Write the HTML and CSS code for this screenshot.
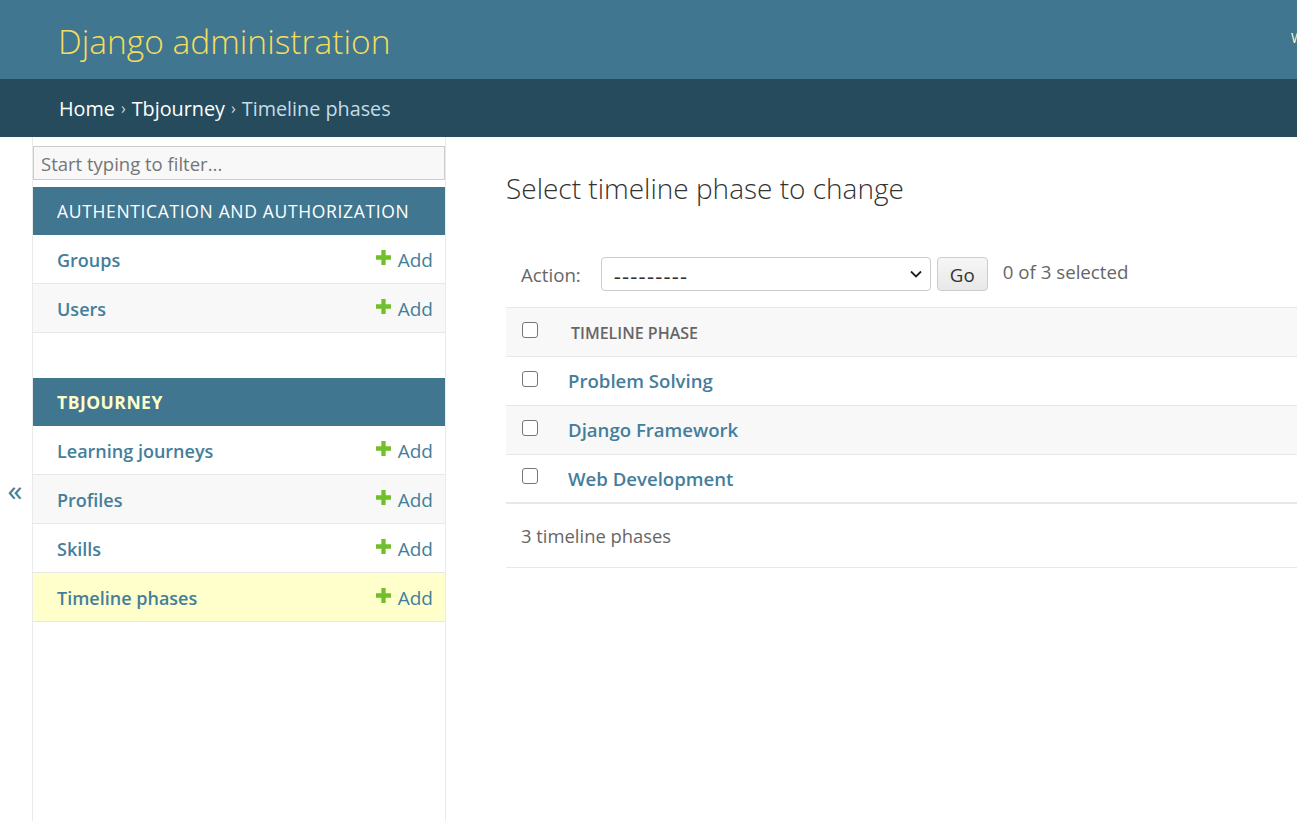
FILE: index.html
```html
<!DOCTYPE html>
<html lang="en">
<head>
<meta charset="utf-8">
<title>Select timeline phase to change | Django site admin</title>
<link rel="stylesheet" href="styles.css">
</head>
<body>
<div class="page">
  <header class="header">
    <div class="branding">Django administration</div>
    <div class="user-tools">Welcome, <strong>admin</strong>. View site / Change password / Log out</div>
  </header>
  <nav class="breadcrumbs">
    <a href="#">Home</a><span class="sep">›</span><a href="#">Tbjourney</a><span class="sep">›</span><span class="current">Timeline phases</span>
  </nav>
  <div class="main">
    <div class="toggle"><span class="toggle-icon">«</span></div>
    <aside class="sidebar">
      <div class="filter">Start typing to filter...</div>
      <div class="module">
        <div class="caption">Authentication and Authorization</div>
        <div class="row"><a class="model" href="#">Groups</a><a class="add" href="#"><svg class="plus" viewBox="0 0 14 14"><path d="M5 0h4v5h5v4H9v5H5V9H0V5h5z"/></svg>Add</a></div>
        <div class="row alt"><a class="model" href="#">Users</a><a class="add" href="#"><svg class="plus" viewBox="0 0 14 14"><path d="M5 0h4v5h5v4H9v5H5V9H0V5h5z"/></svg>Add</a></div>
      </div>
      <div class="module">
        <div class="caption current">Tbjourney</div>
        <div class="row"><a class="model" href="#">Learning journeys</a><a class="add" href="#"><svg class="plus" viewBox="0 0 14 14"><path d="M5 0h4v5h5v4H9v5H5V9H0V5h5z"/></svg>Add</a></div>
        <div class="row alt"><a class="model" href="#">Profiles</a><a class="add" href="#"><svg class="plus" viewBox="0 0 14 14"><path d="M5 0h4v5h5v4H9v5H5V9H0V5h5z"/></svg>Add</a></div>
        <div class="row"><a class="model" href="#">Skills</a><a class="add" href="#"><svg class="plus" viewBox="0 0 14 14"><path d="M5 0h4v5h5v4H9v5H5V9H0V5h5z"/></svg>Add</a></div>
        <div class="row selected"><a class="model" href="#">Timeline phases</a><a class="add" href="#"><svg class="plus" viewBox="0 0 14 14"><path d="M5 0h4v5h5v4H9v5H5V9H0V5h5z"/></svg>Add</a></div>
      </div>
    </aside>
    <main class="content">
      <h1 class="title">Select timeline phase to change</h1>
      <div class="actions">
        <span class="action-label">Action:</span>
        <div class="select"><span class="dashes">---------</span><svg class="chev" viewBox="0 0 12 8"><path d="M1 1.5l5 5 5-5" fill="none" stroke="#222" stroke-width="1.8"/></svg></div>
        <button class="go">Go</button>
        <span class="counter">0 of 3 selected</span>
      </div>
      <div class="table">
        <div class="trow thead"><span class="cb"></span><span class="col">Timeline phase</span></div>
        <div class="trow"><span class="cb"></span><a class="cell" href="#">Problem Solving</a></div>
        <div class="trow alt"><span class="cb"></span><a class="cell" href="#">Django Framework</a></div>
        <div class="trow last"><span class="cb"></span><a class="cell" href="#">Web Development</a></div>
      </div>
      <div class="paginator">3 timeline phases</div>
    </main>
  </div>
</div>
</body>
</html>
```
FILE: styles.css
```css
html, body {
  margin: 0;
  padding: 0;
  overflow: hidden;
  background: #fff;
}
body {
  font-family: "Open Sans", "Noto Sans", sans-serif;
  color: #333;
}
a { text-decoration: none; }
.page {
  width: 1700px;
  min-height: 821px;
  display: flex;
  flex-direction: column;
}
.header {
  height: 79px;
  background: #417690;
  display: flex;
  align-items: center;
  padding-left: 58px;
  position: relative;
}
.branding {
  color: #f5dd5d;
  font-size: 33.5px;
  font-weight: 300;
  line-height: 40px;
  margin-top: 2px;
}
.user-tools {
  position: absolute;
  left: 1291px;
  top: 28px;
  color: #ffc;
  font-size: 13.75px;
  text-transform: uppercase;
  letter-spacing: 0.6px;
  white-space: nowrap;
}
.breadcrumbs {
  height: 58px;
  background: #264b5d;
  display: flex;
  align-items: center;
  padding-left: 59px;
  font-size: 19.8px;
  color: #c4dce8;
}
.breadcrumbs a { color: #fff; }
.breadcrumbs .sep { margin: 0 6px; font-size: 16px; }
.main {
  flex: 1;
  display: flex;
}
.toggle {
  border-right: 1px solid #eaeaea;
  display: flex;
  justify-content: center;
  padding-top: 333px;
  box-sizing: border-box;
  flex: 0 0 33px;
}
.toggle-icon {
  color: #447e9b;
  font-size: 30px;
  line-height: 40px;
  height: 40px;
  margin-left: -2px;
}
.sidebar {
  flex: 0 0 412px;
  border-right: 1px solid #eaeaea;
  padding-top: 9px;
}
.filter {
  height: 34px;
  box-sizing: border-box;
  border: 1px solid #ccc;
  background: #f8f8f8;
  color: #757575;
  font-size: 18.5px;
  padding-left: 7px;
  display: flex;
  align-items: center;
  margin-bottom: 7px;
}
.module { margin-bottom: 45px; }
.caption {
  height: 48px;
  background: #417690;
  color: #fff;
  font-size: 17.5px;
  letter-spacing: 0.66px;
  text-transform: uppercase;
  display: flex;
  align-items: center;
  padding-left: 24px;
}
.caption.current {
  color: #ffc;
  font-weight: 700;
  letter-spacing: 0.5px;
}
.row {
  height: 48px;
  border-bottom: 1px solid #e8e8e8;
  display: flex;
  align-items: center;
  justify-content: space-between;
  padding: 0 12px 0 24px;
  background: #fff;
}
.row.alt { background: #f8f8f8; }
.row.selected { background: #ffc; }
.model {
  color: #447e9b;
  font-weight: 600;
  font-size: 18px;
  margin-top: 2px;
}
.add {
  color: #447e9b;
  font-size: 19px;
  display: flex;
  align-items: center;
  margin-top: 2px;
}
.plus {
  width: 15px;
  height: 15px;
  fill: #70bf2b;
  margin-right: 7px;
  margin-top: -5px;
}
.content {
  flex: 1;
  padding: 0 0 0 60px;
}
.title {
  margin: 0;
  height: 119px;
  box-sizing: border-box;
  padding-top: 32px;
  font-size: 28px;
  font-weight: 300;
  line-height: 38px;
  color: #333;
}
.actions {
  height: 36px;
  display: flex;
  align-items: center;
  padding-left: 15px;
  margin-bottom: 15px;
  font-size: 18.7px;
}
.action-label { color: #666; margin-right: 20px; }
.select {
  width: 330px;
  height: 34px;
  box-sizing: border-box;
  border: 1px solid #ccc;
  border-radius: 4px;
  display: flex;
  align-items: center;
  justify-content: space-between;
  padding: 0 8px 0 12px;
  color: #333;
}
.dashes {
  font-size: 22px;
  letter-spacing: 1.2px;
  margin-top: 2px;
}
.chev { width: 12px; height: 8px; }
.go {
  margin-left: 6px;
  width: 51px;
  height: 34px;
  border: 1px solid #ccc;
  border-radius: 4px;
  background: linear-gradient(#f6f6f6, #e8e8e8);
  font-family: inherit;
  font-size: 18.7px;
  color: #333;
  padding: 0;
}
.counter { color: #666; margin-left: 15px; margin-top: -6px; }
.table {
  border-top: 1px solid #e8e8e8;
}
.trow {
  height: 48px;
  border-bottom: 1px solid #e8e8e8;
  display: flex;
  align-items: center;
  padding-left: 16px;
}
.trow.thead { background: #f8f8f8; }
.trow.alt { background: #f8f8f8; }
.trow.last { border-bottom: 2px solid #e8e8e8; height: 47px; }
.cb {
  width: 16px;
  height: 16px;
  box-sizing: border-box;
  border: 1.5px solid #767676;
  border-radius: 3px;
  background: #fff;
  margin-right: 30px;
  margin-top: -5px;
}
.col {
  color: #666;
  font-size: 16px;
  font-weight: 600;
  text-transform: uppercase;
  margin-left: 3px;
  margin-top: 2px;
}
.cell {
  color: #447e9b;
  font-weight: 600;
  font-size: 18.6px;
  margin-top: -1px;
}
.paginator {
  height: 64px;
  box-sizing: border-box;
  border-bottom: 1px solid #e8e8e8;
  display: flex;
  align-items: center;
  padding-left: 15px;
  color: #666;
  font-size: 18.4px;
}
```
